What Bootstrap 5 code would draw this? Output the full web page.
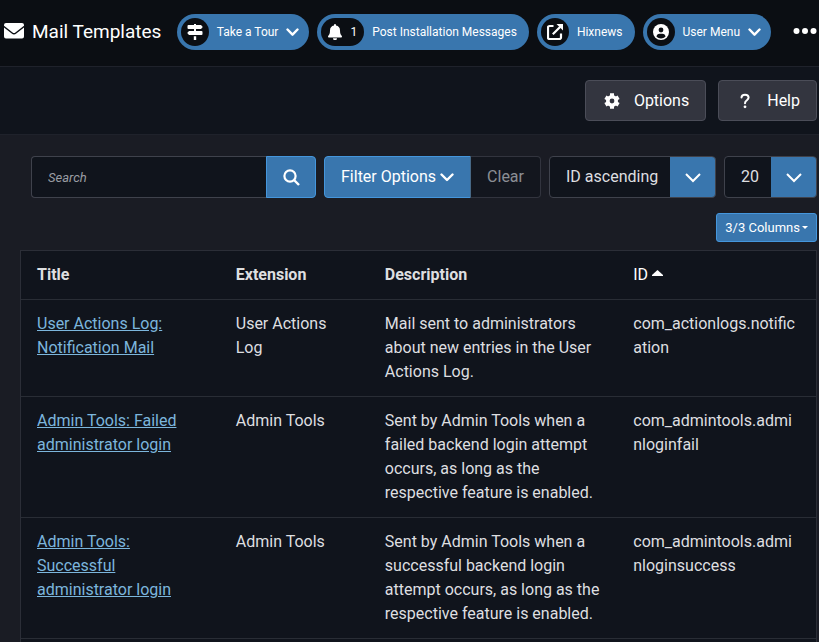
<!DOCTYPE html>
<html lang="en" data-bs-theme="dark">
<head>
<meta charset="utf-8">
<meta name="viewport" content="width=device-width, initial-scale=1">
<title>Mail Templates</title>
<link href="https://cdn.jsdelivr.net/npm/bootstrap@5.3.0/dist/css/bootstrap.min.css" rel="stylesheet">
<style>
:root{--panel:#10141c;--blue:#3976ae;--edge:#3f424c}
body{font-family:Roboto,"Liberation Sans",sans-serif;background:#1a1c24;color:#dedfe0;font-size:16px;line-height:24px}
svg{fill:currentColor;flex:none;display:block}
.topbar{background:#0b0e13;height:67px;border-bottom:1px solid #1f222b;padding:0 2px 2px 4px;color:#fff}
.page-name{font-size:19px;line-height:24px;font-weight:400}
.pill{background:var(--blue);color:#fff;border:0;border-radius:18px;height:36px;padding:4px 12px 4px 4px;font-size:12px;line-height:18px;text-decoration:none;white-space:nowrap}
.pill:hover{color:#fff}
.pill-menu{padding-right:10px}
.disc{background:#0b0e13;border-radius:14px;height:28px;min-width:28px;margin-right:8px}
.disc-count{padding:0 7px}
.more-btn{margin-left:14px}
.toolbar{background:var(--panel);height:68px;border-bottom:1px solid #1f222b;padding-right:2px}
.tool-btn{background:#33353f;border:1px solid #4b4d58;border-radius:4px;color:#fff;height:41px;padding:0 16px}
.tool-icon{margin:0 14px 0 2px}
.filters{padding:21px 2px 0 31px}
.ctl{height:42px;border-radius:4px;background-color:var(--panel);border:1px solid var(--edge);color:#dedfe0}
.search-box{padding:0 16px;font-size:13px;font-style:italic;border-right:0}
.search-box::placeholder{color:#9a9da3}
.blue-btn{background:var(--blue);border:1px solid #4596dc;color:#fff}
.filter-btn,.clear-btn{border-radius:4px;padding:0 16px}
.btn-search{width:50px;height:42px;border-radius:4px}
.clear-btn{opacity:.65;background:var(--panel);border:1px solid var(--edge);border-left:0;color:#c8cbd0}
.pick{appearance:none;padding:0 48px 0 16px;background-image:url("data:image/svg+xml,%3Csvg xmlns='http://www.w3.org/2000/svg' width='16' height='16' viewBox='0 0 16 16'%3E%3Cpath fill='none' stroke='%23fff' stroke-width='2' d='m1 5 7 7 7-7'/%3E%3C/svg%3E"),linear-gradient(var(--blue),var(--blue));background-repeat:no-repeat;background-position:right 15px center,right center;background-size:16px 16px,46px 100%;background-origin:border-box}
.pick-sort{width:167px}.pick-limit{width:93px}
.columns-row{margin:15px 2px 0 0}
.columns-btn{height:29px;border-radius:3px;padding:0 8px;font-size:13px;line-height:20px}
.columns-btn::after{margin-left:2px;vertical-align:3px;border-width:3px 3px 0}
.list-panel{background:var(--panel);border:1px solid #2b2e37;border-bottom:0;margin:8px 2px 0 20px}
.mail-table{table-layout:fixed;color:#dedfe0;--bs-table-bg:transparent;--bs-table-color:#dedfe0;border-color:#292d35}
.mail-table th,.mail-table td{padding:12px 16px}
.mail-table th{font-weight:700;vertical-align:top}
.mail-table tbody th{font-weight:400}
.mail-table a{color:#7cb6dc}
.mail-table th .sorter{color:#fff;text-decoration:none;font-weight:400}
.w-title{width:25%}.w-ext{width:18.75%}.w-desc{width:31.25%}
</style>
<script src="https://cdn.jsdelivr.net/npm/bootstrap@5.3.0/dist/js/bootstrap.bundle.min.js"></script>
</head>
<body class="d-flex flex-column vh-100 overflow-hidden">
<header class="topbar d-flex align-items-center flex-shrink-0">
  <svg width="20" height="18" viewBox="0 0 20 18" aria-hidden="true"><path d="M2 0h16a2 2 0 0 1 2 2v.8l-8.600 6.700a2.300 2.300 0 0 1-2.800 0L0 2.800V2a2 2 0 0 1 2-2zM0 4.500l7.700 6a3.700 3.700 0 0 0 4.600 0l7.700-6V13.500a2 2 0 0 1-2 2H2a2 2 0 0 1-2-2z"/></svg>
  <h1 class="page-name mb-0 ms-2 text-nowrap">Mail Templates</h1>
  <nav class="d-flex align-items-center gap-2 ms-auto" aria-label="Status">
    <button type="button" class="pill pill-menu d-flex align-items-center">
      <span class="disc d-flex align-items-center justify-content-center"><svg width="16" height="16" viewBox="0 0 16 16"><path d="M7 0h2v1h5l1.800 2L14 5H1.500a1 1 0 0 1-1-1V2a1 1 0 0 1 1-1H7zM7 5h2v2h5.500a1 1 0 0 1 1 1v2a1 1 0 0 1-1 1H2L.2 9 2 7h5zM6.800 12.200h2.400V16H6.800z"/></svg></span>
      Take a Tour
      <svg class="ms-2" width="13" height="9" viewBox="0 0 13 9"><path d="M1.500 1.500l5 5.200 5-5.200" fill="none" stroke="#fff" stroke-width="2.400" stroke-linecap="round" stroke-linejoin="round"/></svg>
    </button>
    <a href="#" class="pill d-flex align-items-center">
      <span class="disc disc-count d-flex align-items-center gap-2"><svg width="14" height="16" viewBox="0 0 14 16"><path d="M7 0a1 1 0 0 0-1 1v.600A5 5 0 0 0 2 6.500c0 3.200-.8 4.200-1.700 5.300-.6.700-.1 1.700.8 1.700h11.800c.9 0 1.400-1 .8-1.700C12.800 10.700 12 9.700 12 6.500a5 5 0 0 0-4-4.900V1a1 1 0 0 0-1-1zM5 14.300a2 2 0 0 0 4 0z"/></svg>1</span>
      Post Installation Messages
    </a>
    <a href="#" class="pill d-flex align-items-center">
      <span class="disc d-flex align-items-center justify-content-center"><svg width="16" height="16" viewBox="0 0 16 16"><path d="M6.500 2H2.500A1.500 1.500 0 0 0 1 3.500v10A1.500 1.500 0 0 0 2.500 15h10a1.500 1.500 0 0 0 1.500-1.500V9.500M5.800 10.200l7.500-7.500" fill="none" stroke="#fff" stroke-width="2.200"/><path d="M9.500 0H16v6.500z"/></svg></span>
      Hixnews
    </a>
    <button type="button" class="pill pill-menu d-flex align-items-center">
      <span class="disc d-flex align-items-center justify-content-center"><svg width="16" height="16" viewBox="0 0 16 16"><circle cx="8" cy="8" r="8"/><circle cx="8" cy="6" r="2.400" fill="#0b0e13"/><path d="M3.500 12.700a3.300 3.300 0 0 1 3.200-3h2.600a3.300 3.300 0 0 1 3.200 3A6.500 6.500 0 0 1 8 14.400a6.500 6.500 0 0 1-4.500-1.700z" fill="#0b0e13"/></svg></span>
      User Menu
      <svg class="ms-2" width="13" height="9" viewBox="0 0 13 9"><path d="M1.500 1.500l5 5.200 5-5.200" fill="none" stroke="#fff" stroke-width="2.400" stroke-linecap="round" stroke-linejoin="round"/></svg>
    </button>
    <button type="button" class="btn border-0 p-0 text-white more-btn" aria-label="More"><svg width="24" height="8" viewBox="0 0 24 8"><circle cx="3.500" cy="3" r="3"/><circle cx="12" cy="3" r="3"/><circle cx="20.500" cy="3" r="3"/></svg></button>
  </nav>
</header>
<div class="toolbar d-flex align-items-center justify-content-end flex-shrink-0">
  <button type="button" class="tool-btn d-flex align-items-center me-2">
    <svg class="tool-icon" width="16" height="16" viewBox="0 0 16 16" aria-hidden="true"><g fill="none" stroke="#fff"><circle cx="8" cy="8" r="4.200" stroke-width="3.600"/><path stroke-width="4" d="M8 4V.2M8 12v3.800M11.500 6l3.100-1.800M4.500 10l-3.100 1.800M11.500 10l3.100 1.800M4.500 6 1.400 4.200"/></g></svg>
    Options</button>
  <button type="button" class="tool-btn d-flex align-items-center ms-1">
    <svg class="tool-icon" width="16" height="16" viewBox="0 0 16 16" aria-hidden="true"><path d="M4.500 4.500C4.500 2.700 6 1.700 8 1.700s3.600 1.100 3.600 2.900C11.600 7.300 8 7.100 8 10.200" fill="none" stroke="#fff" stroke-width="2" stroke-linecap="round"/><circle cx="8" cy="13.800" r="1.400"/></svg>
    Help</button>
</div>
<main class="d-flex flex-column flex-grow-1">
  <form class="filters d-flex gap-2">
    <div class="input-group flex-nowrap w-auto flex-grow-1">
      <input type="text" class="form-control ctl search-box" placeholder="Search" aria-label="Search">
      <button type="button" class="btn blue-btn btn-search p-0 d-flex align-items-center justify-content-center" aria-label="Search"><svg width="17" height="17" viewBox="0 0 17 17"><circle cx="7" cy="7" r="5.600" fill="none" stroke="#fff" stroke-width="2.200"/><path d="m11 11 5 5" stroke="#fff" stroke-width="2.400"/></svg></button>
    </div>
    <div class="btn-group flex-shrink-0">
      <button type="button" class="btn blue-btn filter-btn d-flex align-items-center">Filter Options<svg class="ms-1" width="14" height="9" viewBox="0 0 14 9"><path d="M1.500 1.500 7 7l5.500-5.500" fill="none" stroke="#fff" stroke-width="2.400" stroke-linecap="round" stroke-linejoin="round"/></svg></button>
      <button type="button" class="btn clear-btn border-start">Clear</button>
    </div>
    <select class="ctl pick pick-sort" aria-label="Sort table by"><option>ID ascending</option></select>
    <select class="ctl pick pick-limit" aria-label="Items per page"><option>20</option></select>
  </form>
  <div class="columns-row d-flex justify-content-end"><button type="button" class="btn blue-btn columns-btn dropdown-toggle">3/3 Columns</button></div>
  <div class="list-panel flex-grow-1">
    <table class="table mail-table mb-0">
      <thead><tr><th scope="col" class="w-title">Title</th><th scope="col" class="w-ext">Extension</th><th scope="col" class="w-desc">Description</th><th scope="col"><a href="#" class="sorter d-flex align-items-center">ID<svg class="ms-1 mb-1" width="11" height="6" viewBox="0 0 11 6"><path d="M5.500 0 11 5v1H0V5z"/></svg></a></th></tr></thead>
      <tbody>
        <tr><th scope="row"><a href="#">User Actions Log: Notification Mail</a></th><td>User Actions Log</td><td>Mail sent to administrators about new entries in the User Actions Log.</td><td class="text-break">com_actionlogs.notification</td></tr>
        <tr><th scope="row"><a href="#">Admin Tools: Failed administrator login</a></th><td>Admin Tools</td><td>Sent by Admin Tools when a failed backend login attempt occurs, as long as the respective feature is enabled.</td><td class="text-break">com_admintools.adminloginfail</td></tr>
        <tr><th scope="row"><a href="#">Admin Tools: Successful administrator login</a></th><td>Admin Tools</td><td>Sent by Admin Tools when a successful backend login attempt occurs, as long as the respective feature is enabled.</td><td class="text-break">com_admintools.adminloginsuccess</td></tr>
      </tbody>
    </table>
  </div>
</main>
</body>
</html>
